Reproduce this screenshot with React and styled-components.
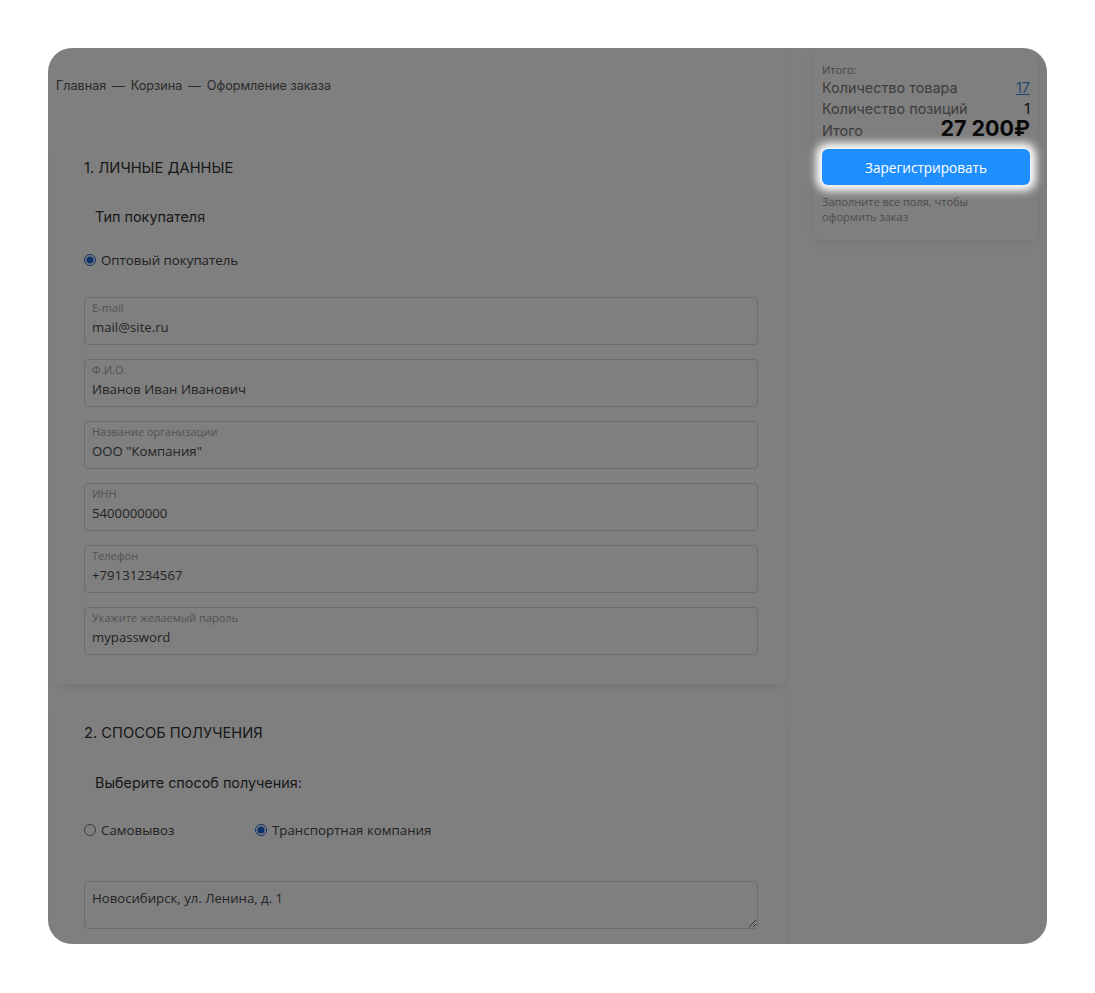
import React from "react";
import styled, { createGlobalStyle } from "styled-components";

const Global = createGlobalStyle`
  html, body { margin: 0; padding: 0; background: #fff; }
  body { font-family: Inter, "Noto Sans", sans-serif; }
  * { box-sizing: border-box; }
`;

const Page = styled.div`
  padding: 48px;
  width: 1095px;
  height: 993px;
`;

const Frame = styled.div`
  position: relative;
  width: 999px;
  height: 896px;
  border-radius: 24px;
  overflow: hidden;
  background: #fff;
  display: flex;
  gap: 28px;
  padding: 0 9px 0 8px;
`;

const Overlay = styled.div`
  position: absolute;
  inset: 0;
  background: rgba(0, 0, 0, 0.5);
  z-index: 5;
  pointer-events: none;
`;

const Main = styled.div`
  width: 730px;
  flex: none;
  display: flex;
  flex-direction: column;
  padding-top: 30px;
  box-shadow: 1px 0 0 rgba(0, 0, 0, 0.03);
`;

const Breadcrumbs = styled.div`
  font-family: Inter, sans-serif;
  font-size: 12.6px;
  line-height: 16px;
  color: #555;
  display: flex;
  gap: 6px;
`;

const Card = styled.section`
  background: #fff;
  box-shadow: 0 8px 12px -6px rgba(0, 0, 0, 0.12);
  border-radius: 6px;
  padding: 23px 28px 29px;
  margin-top: ${(p) => p.$mt || 0}px;
  display: flex;
  flex-direction: column;
`;

const Heading = styled.h2`
  margin: 0;
  font-family: Inter, sans-serif;
  font-weight: 400;
  font-size: 14.7px;
  line-height: 18px;
  color: #333;
  text-transform: uppercase;
`;

const SubHeading = styled.div`
  font-family: Inter, sans-serif;
  font-size: 14.4px;
  line-height: 18px;
  color: #333;
  padding-left: 11px;
  margin-top: ${(p) => p.$mt}px;
`;

const RadioRow = styled.div`
  display: flex;
  align-items: center;
  margin-top: ${(p) => p.$mt}px;
  height: 16px;
`;

const RadioLabel = styled.label`
  display: flex;
  align-items: center;
  gap: 5px;
  font-family: "Open Sans", sans-serif;
  font-size: 13.3px;
  line-height: 16px;
  color: #444;
  min-width: ${(p) => p.$w || 0}px;
`;

const Radio = styled.input.attrs({ type: "radio" })`
  margin: 0;
  width: 12px;
  height: 12px;
  accent-color: #1565d8;
`;

const Fields = styled.div`
  display: flex;
  flex-direction: column;
  gap: 14px;
  margin-top: 29px;
  width: 674px;
`;

const Field = styled.label`
  display: flex;
  flex-direction: column;
  height: 48px;
  border: 1px solid #d6d6d6;
  border-radius: 4px;
  padding: 3px 7px 0;
`;

const FieldLabel = styled.span`
  font-family: "Open Sans", sans-serif;
  font-size: 11px;
  line-height: 14px;
  color: #a6a6a6;
`;

const FieldInput = styled.input`
  border: 0;
  outline: none;
  padding: 0;
  margin-top: 3px;
  background: transparent;
  font-family: "Open Sans", sans-serif;
  font-size: 13.2px;
  line-height: 18px;
  color: #484848;
`;

const Address = styled.textarea`
  margin-top: 43px;
  width: 674px;
  height: 48px;
  border: 1px solid #d6d6d6;
  border-radius: 4px;
  padding: 8px 7px;
  resize: vertical;
  font-family: "Open Sans", sans-serif;
  font-size: 13.2px;
  line-height: 16px;
  color: #484848;
  outline: none;
`;

const Aside = styled.aside`
  width: 224px;
  flex: none;
`;

const Summary = styled.div`
  background: #fff;
  border-radius: 0 0 8px 8px;
  box-shadow: 0 4px 14px rgba(0, 0, 0, 0.07);
  padding: 14px 8px 16px;
  display: flex;
  flex-direction: column;
`;

const Small = styled.div`
  font-family: "Open Sans", sans-serif;
  font-size: 11px;
  line-height: 15px;
  color: #8a8a8a;
`;

const Row = styled.div`
  display: flex;
  justify-content: space-between;
  align-items: baseline;
  font-family: Inter, sans-serif;
  font-size: 14.4px;
  line-height: 21px;
  color: #7a7a7a;
`;

const Value = styled.span`
  color: #222;
`;

const LinkValue = styled.a`
  color: #4d90e8;
  text-decoration: underline;
`;

const Total = styled.span`
  font-family: Inter, sans-serif;
  font-weight: 700;
  font-size: 21.5px;
  line-height: 19px;
  color: #111;
`;

const Button = styled.button`
  position: relative;
  z-index: 10;
  margin-top: 8px;
  height: 36px;
  width: 100%;
  border: 0;
  border-radius: 6px;
  background: #1f8fff;
  color: #fff;
  font-family: "Open Sans", sans-serif;
  font-weight: 500;
  font-size: 13.6px;
  cursor: pointer;
  box-shadow: 0 0 8px 6px #fff;
`;

const Note = styled(Small)`
  margin-top: 9px;
  color: #9a9a9a;
`;

const fields = [
  ["E-mail", "mail@site.ru"],
  ["Ф.И.О.", "Иванов Иван Иванович"],
  ["Название организации", 'ООО "Компания"'],
  ["ИНН", "5400000000"],
  ["Телефон", "+79131234567"],
  ["Укажите желаемый пароль", "mypassword"],
];

export default function App() {
  return (
    <Page>
      <Global />
      <Frame>
        <Main>
          <Breadcrumbs>
            <span>Главная</span>
            <span>—</span>
            <span>Корзина</span>
            <span>—</span>
            <span>Оформление заказа</span>
          </Breadcrumbs>
          <Card $mt={42}>
            <Heading>1. Личные данные</Heading>
            <SubHeading $mt={31}>Тип покупателя</SubHeading>
            <RadioRow $mt={26}>
              <RadioLabel>
                <Radio name="buyer" defaultChecked />
                Оптовый покупатель
              </RadioLabel>
            </RadioRow>
            <Fields>
              {fields.map(([l, v]) => (
                <Field key={l}>
                  <FieldLabel>{l}</FieldLabel>
                  <FieldInput defaultValue={v} />
                </Field>
              ))}
            </Fields>
          </Card>
          <Card $mt={17}>
            <Heading>2. Способ получения</Heading>
            <SubHeading $mt={32}>Выберите способ получения:</SubHeading>
            <RadioRow $mt={30}>
              <RadioLabel $w={171}>
                <Radio name="delivery" />
                Самовывоз
              </RadioLabel>
              <RadioLabel>
                <Radio name="delivery" defaultChecked />
                Транспортная компания
              </RadioLabel>
            </RadioRow>
            <Address defaultValue="Новосибирск, ул. Ленина, д. 1" />
          </Card>
        </Main>
        <Aside>
          <Summary>
            <Small>Итого:</Small>
            <Row>
              <span>Количество товара</span>
              <LinkValue href="#">17</LinkValue>
            </Row>
            <Row>
              <span>Количество позиций</span>
              <Value>1</Value>
            </Row>
            <Row>
              <span>Итого</span>
              <Total>27 200₽</Total>
            </Row>
            <Button>Зарегистрировать</Button>
            <Note>
              Заполните все поля, чтобы
              <br />
              оформить заказ
            </Note>
          </Summary>
        </Aside>
        <Overlay />
      </Frame>
    </Page>
  );
}
